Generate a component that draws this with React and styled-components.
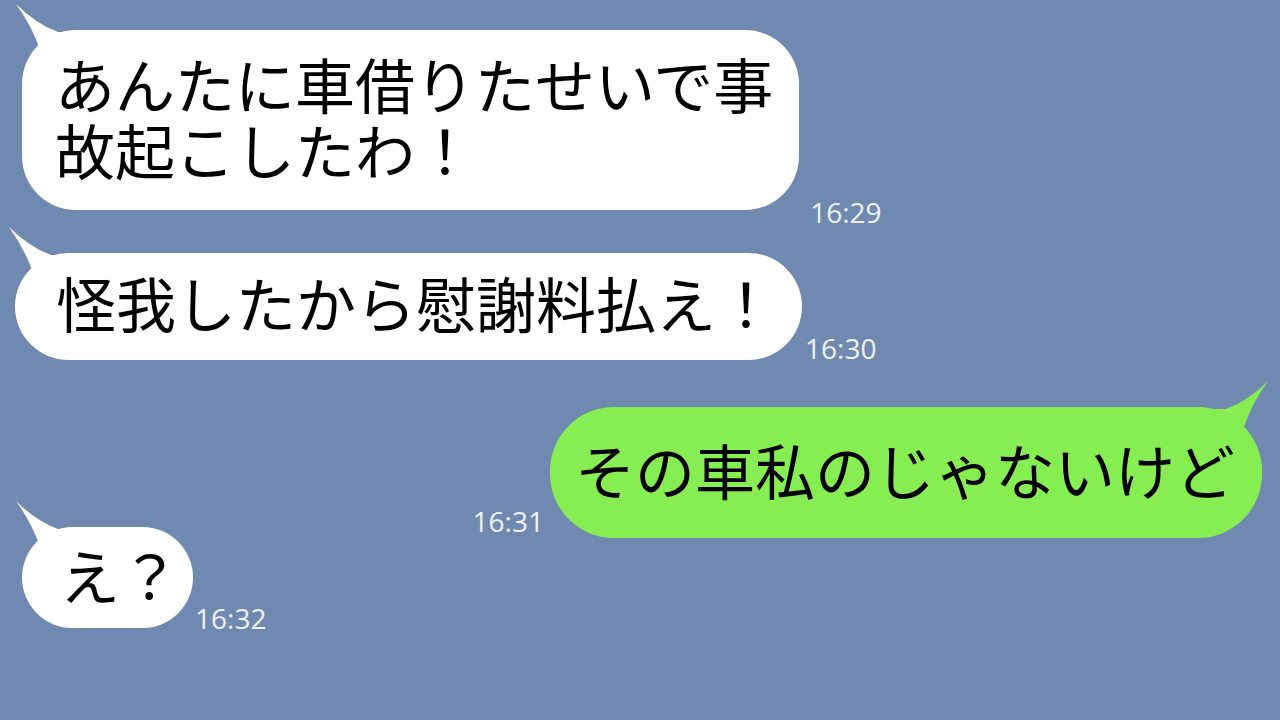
import React from 'react';
import styled, { createGlobalStyle, css } from 'styled-components';

const GlobalStyle = createGlobalStyle`
  html, body {
    margin: 0;
    padding: 0;
    background: #7089b0;
  }
`;

const Styled = {
  Screen: styled.div`
    display: flex;
    flex-direction: column;
    width: 1280px;
    height: 720px;
    padding-top: 30px;
    box-sizing: border-box;
    overflow: hidden;
    background: #7089b0;
  `,
  Row: styled.div`
    display: flex;
    align-items: flex-end;
    justify-content: ${(p) => (p.$mine ? 'flex-end' : 'flex-start')};
    margin-top: ${(p) => p.$top}px;
    margin-left: ${(p) => p.$left || 0}px;
    margin-right: ${(p) => p.$right || 0}px;
  `,
  Bubble: styled.div`
    position: relative;
    padding: ${(p) => p.$pad};
    border-radius: ${(p) => (p.$mine ? 64 : 54)}px;
    background: ${(p) => (p.$mine ? '#86ee52' : '#ffffff')};
    color: #000;
    font-family: 'Noto Sans CJK JP', 'Noto Sans', sans-serif;
    font-size: 60px;
    font-weight: 400;
    line-height: 66px;
    white-space: nowrap;
  `,
  Tail: styled.svg`
    position: absolute;
    top: -30px;
    width: 64px;
    height: 50px;
    ${(p) =>
      p.$mine
        ? css`
            right: -14px;
            transform: scaleX(-1);
          `
        : css`
            left: -14px;
          `}
  `,
  Time: styled.span`
    font-family: 'Open Sans', 'Liberation Sans', sans-serif;
    font-size: 28px;
    line-height: 28px;
    color: #eef2f8;
    margin: 0 ${(p) => p.$gapRight || 0}px ${(p) => p.$bottom}px
      ${(p) => p.$gapLeft || 0}px;
  `,
};

const Tail = ({ mine }) => (
  <Styled.Tail $mine={mine} viewBox="0 0 64 50">
    <path
      d="M8 4 Q 24 26 32 50 L 64 50 L 64 32 L 50 32 Q 28 24 8 4 Z"
      fill={mine ? '#86ee52' : '#ffffff'}
    />
  </Styled.Tail>
);

const messages = [
  {
    lines: ['あんたに車借りたせいで事', '故起こしたわ！'],
    time: '16:29',
    top: 0,
    left: 22,
    pad: '20px 26px 28px 33px',
    timeBottom: -16,
    gap: 11,
  },
  {
    lines: ['怪我したから慰謝料払え！'],
    time: '16:30',
    top: 43,
    left: 15,
    pad: '16px 26px 25px 41px',
    timeBottom: -2,
    gap: 3,
  },
  {
    lines: ['その車私のじゃないけど'],
    time: '16:31',
    top: 47,
    right: 18,
    mine: true,
    pad: '29px 27px 36px 25px',
    timeBottom: 3,
    gap: 6,
  },
  {
    lines: ['え？'],
    time: '16:32',
    top: -11,
    left: 22,
    pad: '14px 13px 21px 38px',
    timeBottom: -4,
    gap: 2,
  },
];

const App = () => (
  <>
    <GlobalStyle />
    <Styled.Screen>
      {messages.map((m, i) => (
        <Styled.Row
          key={`msg-${i}`}
          $top={m.top}
          $left={m.left}
          $right={m.right}
          $mine={m.mine}>
          {m.mine && (
            <Styled.Time $bottom={m.timeBottom} $gapRight={m.gap}>
              {m.time}
            </Styled.Time>
          )}
          <Styled.Bubble $mine={m.mine} $pad={m.pad}>
            <Tail mine={m.mine} />
            {m.lines.map((line, j) => (
              <div key={`line-${j}`}>{line}</div>
            ))}
          </Styled.Bubble>
          {!m.mine && (
            <Styled.Time $bottom={m.timeBottom} $gapLeft={m.gap}>
              {m.time}
            </Styled.Time>
          )}
        </Styled.Row>
      ))}
    </Styled.Screen>
  </>
);

export default App;
